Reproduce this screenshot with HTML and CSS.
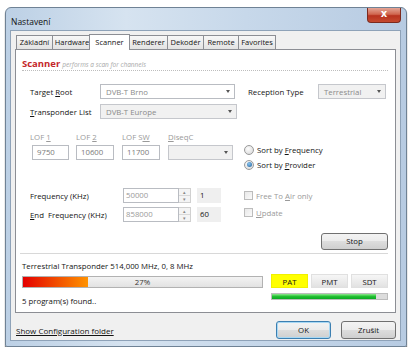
FILE: index.html
```html
<!DOCTYPE html>
<html>
<head>
<meta name="viewport" content="width=device-width, initial-scale=1">
<link rel="stylesheet" href="styles.css">
</head>
<body>

<div class="window">
  <div class="titlebar">
    <span class="title">Nastavení</span>
    <span class="closeBtn">x</span>
  </div>

  <div class="client">
    <div class="tabs">
      <span class="tab t1">Základní</span>
      <span class="tab t2">Hardware</span>
      <span class="tab active t3">Scanner</span>
      <span class="tab t4">Renderer</span>
      <span class="tab t5">Dekodér</span>
      <span class="tab t6">Remote</span>
      <span class="tab t7">Favorites</span>
    </div>

    <div class="page">
      <div class="head">
        <b>Scanner</b> <i>performs a scan for channels</i>
      </div>

      <div class="row r1">
        <label class="lbl">Target <u>R</u>oot</label>
        <div class="combo white w135"><span>DVB-T Brno</span><em></em></div>
        <label class="lbl lblRec">Reception Type</label>
        <div class="combo w68"><span>Terrestrial</span><em></em></div>
      </div>

      <div class="row r2">
        <label class="lbl"><u>T</u>ransponder List</label>
        <div class="combo w137"><span>DVB-T Europe</span><em></em></div>
      </div>

      <div class="lofBlock">
        <div class="lofCols">
          <div class="lofCol">
            <span class="gray">LOF <u>1</u></span>
            <div class="box">9750</div>
          </div>
          <div class="lofCol">
            <span class="gray">LOF <u>2</u></span>
            <div class="box">10600</div>
          </div>
          <div class="lofCol">
            <span class="gray">LOF S<u>W</u></span>
            <div class="box">11700</div>
          </div>
          <div class="lofCol wide">
            <span class="gray"><u>D</u>iseqC</span>
            <div class="combo w65"><span></span><em></em></div>
          </div>
        </div>
        <div class="radios">
          <div class="opt"><span class="radio"></span><span>Sort by <u>F</u>requency</span></div>
          <div class="opt"><span class="radio on"></span><span>Sort by <u>P</u>rovider</span></div>
        </div>
      </div>

      <div class="freqBlock">
        <div class="freqRows">
          <div class="frow">
            <label class="lbl lblFreq">Frequency (KHz)</label>
            <div class="box fbox">50000</div>
            <div class="spin"><i>&#9652;</i><i>&#9662;</i></div>
            <div class="step">1</div>
          </div>
          <div class="frow">
            <label class="lbl lblFreq"><u>E</u>nd&nbsp; Frequency (KHz)</label>
            <div class="box fbox">858000</div>
            <div class="spin"><i>&#9652;</i><i>&#9662;</i></div>
            <div class="step">60</div>
          </div>
        </div>
        <div class="checks">
          <div class="opt"><span class="chk"></span><span class="gray">Free To <u>A</u>ir only</span></div>
          <div class="opt"><span class="chk"></span><span class="gray"><u>U</u>pdate</span></div>
        </div>
      </div>

      <div class="stopRow">
        <span class="btn stop">Stop</span>
      </div>

      <div class="sep"></div>

      <div class="status">Terrestrial Transponder 514,000 MHz, 0, 8 MHz</div>

      <div class="progRow">
        <div class="prog">
          <div class="progFill" style="width:27%"></div>
          <span class="progText">27%</span>
        </div>
        <span class="tbl pat">PAT</span>
        <span class="tbl">PMT</span>
        <span class="tbl">SDT</span>
      </div>

      <div class="foundRow">
        <span class="found">5 program(s) found..</span>
        <div class="green">
          <div class="greenFill" style="width:90%"></div>
        </div>
      </div>
    </div>

    <div class="bottom">
      <span class="link">Show Configuration folder</span>
      <span class="btn ok">OK</span>
      <span class="btn">Zrušit</span>
    </div>
  </div>
</div>

</body>
</html>
```

FILE: styles.css
```css
body {
  margin: 0;
  background: #fff;
  font-family: "Open Sans", "Noto Sans", sans-serif;
  font-size: 7.8px;
  color: #141414;
}

* {
  box-sizing: border-box;
}

/* Window frame */
.window {
  margin: 7px 0 0 5px;
  width: 402px;
  height: 340px;
  border: 1px solid #6f8295;
  border-radius: 6px 6px 2px 2px;
  background: linear-gradient(to right, #bcd0e5, #d6e3f0 30%, #c7d8ea 60%, #b7cbe2);
  padding: 0 5px 5px 4px;
  display: flex;
  flex-direction: column;
  box-shadow: 0 2px 1px #2c2c2c;
}

.titlebar {
  height: 22px;
  display: flex;
  justify-content: space-between;
  align-items: flex-start;
}

.title {
  margin: 8px 0 0 1px;
  font-size: 8.5px;
  color: #111;
}

.closeBtn {
  width: 34px;
  height: 15px;
  border: 1px solid #7c2a1e;
  border-top: none;
  border-radius: 0 0 4px 4px;
  background: linear-gradient(#e4a596, #d0664f 45%, #b8321f 55%, #c54a2f);
  color: #fff;
  font-weight: bold;
  font-size: 10px;
  line-height: 12px;
  text-align: center;
  font-family: "DejaVu Sans", sans-serif;
}

.client {
  flex: 1;
  background: #f0f0f0;
  border: 1px solid #8ea2b8;
  padding: 3px 5px 0 4px;
}

/* Tabs */
.tabs {
  display: flex;
  align-items: flex-end;
  height: 15px;
  margin-left: 1px;
  position: relative;
  z-index: 1;
  font-size: 7.5px;
}

.tab {
  height: 14px;
  line-height: 13px;
  text-align: center;
  border: 1px solid #8c8e94;
  border-bottom: none;
  margin-right: -1px;
  background: linear-gradient(#f7f7f7, #e3e3e3);
}

.tab.active {
  height: 16px;
  margin: 0 -1px -1px -2px;
  background: #fff;
  line-height: 14px;
}

.t1 { width: 37px; }
.t2 { width: 40px; }
.t3 { width: 41px; }
.t4 { width: 39px; }
.t5 { width: 37px; }
.t6 { width: 36px; }
.t7 { width: 38px; }

.page {
  width: 381px;
  height: 264px;
  border: 1px solid #8c8e94;
  background: #fff;
  padding: 0 6px;
}

.head {
  margin-top: 8px;
  width: 366px;
  height: 13px;
  line-height: 11px;
  border-bottom: 1px dotted #bdbdbd;
}

.head b {
  color: #c4262a;
  font-size: 9.5px;
}

.head i {
  color: #a8a8a8;
  font-size: 6.5px;
}

.row {
  display: flex;
  align-items: center;
  height: 15px;
}

.r1 { margin-top: 13px; }
.r2 { margin-top: 5px; }

.lbl {
  width: 78px;
  padding-left: 8px;
}

.lblRec {
  width: 70px;
  margin-left: 13px;
  padding-left: 0;
}

/* Combos and text boxes */
.combo {
  height: 15px;
  border: 1px solid #c5c7cc;
  background: #f1f1f1;
  display: flex;
  align-items: center;
  justify-content: space-between;
  padding: 0 4px 0 5px;
  color: #8a8a8a;
}

.combo.white {
  background: #fff;
  border-color: #b9bcc2;
}

.combo em {
  width: 0;
  height: 0;
  border-left: 2.5px solid transparent;
  border-right: 2.5px solid transparent;
  border-top: 3px solid #555;
}

.w135 { width: 135px; }
.w137 { width: 137px; }
.w68 { width: 68px; }
.w65 { width: 65px; }

.gray {
  color: #9a9a9a;
}

.lofBlock {
  display: flex;
  margin-top: 13px;
  height: 40px;
}

.lofCols {
  display: flex;
  width: 222px;
  padding-left: 8px;
}

.lofCol {
  width: 46px;
  display: flex;
  flex-direction: column;
}

.lofCol.wide {
  width: 70px;
}

.lofCol > span {
  height: 11px;
  line-height: 10px;
  margin-bottom: 2px;
}

.box {
  width: 38px;
  height: 15px;
  border: 1px solid #b9bcc2;
  background: #fff;
  color: #7a7a7a;
  line-height: 13px;
  padding-left: 4px;
}

.lofCol:first-child .box {
  margin-left: 2px;
  width: 37px;
}

.radios {
  padding-top: 10px;
}

.opt {
  height: 15px;
  display: flex;
  align-items: center;
}

.radio {
  width: 10px;
  height: 10px;
  border-radius: 50%;
  border: 1px solid #9a9a9a;
  background: radial-gradient(circle at 40% 35%, #fdfdfd, #d4d4d4);
  margin-right: 3px;
  display: flex;
  align-items: center;
  justify-content: center;
}

.radio.on::after {
  content: "";
  width: 5px;
  height: 5px;
  border-radius: 50%;
  background: radial-gradient(circle at 40% 35%, #8ac6f2, #1f5d96);
}

.freqBlock {
  display: flex;
  margin-top: 16px;
}

.freqRows {
  width: 222px;
}

.frow {
  display: flex;
  align-items: center;
  height: 15px;
  margin-bottom: 4px;
}

.lblFreq {
  width: 101px;
}

.fbox {
  width: 56px;
  color: #9a9a9a;
  padding-left: 2px;
}

.spin {
  width: 12px;
  height: 15px;
  border: 1px solid #d0d0d0;
  border-left: none;
  display: flex;
  flex-direction: column;
  background: #f4f4f4;
}

.spin i {
  flex: 1;
  font-style: normal;
  font-size: 5px;
  line-height: 6px;
  text-align: center;
  color: #888;
}

.spin i:first-child {
  border-bottom: 1px solid #d8d8d8;
}

.step {
  width: 24px;
  height: 15px;
  margin-left: 6px;
  background: #efefef;
  line-height: 15px;
  padding-left: 3px;
}

.checks .opt {
  margin-bottom: 2px;
}

.chk {
  width: 9px;
  height: 9px;
  border: 1px solid #bcbcbc;
  background: linear-gradient(135deg, #e8e8e8, #fafafa);
  margin-right: 3px;
}

/* Buttons */
.btn {
  display: inline-block;
  height: 17px;
  line-height: 15px;
  text-align: center;
  border: 1px solid #707070;
  border-radius: 3px;
  background: linear-gradient(#f3f3f3, #ebebeb 50%, #dddddd 50%, #cfcfcf);
}

.stopRow {
  display: flex;
  justify-content: flex-end;
  width: 366px;
  margin-top: 7px;
}

.stop {
  width: 67px;
}

.sep {
  width: 368px;
  margin-left: -2px;
  margin-top: 3px;
  border-top: 1px solid #d8d8d8;
}

.status {
  margin-top: 6px;
  height: 12px;
  line-height: 12px;
}

.progRow {
  display: flex;
  height: 14px;
  margin-top: 2px;
}

.prog {
  width: 241px;
  height: 12px;
  margin-top: 2px;
  border: 1px solid #b2b2b2;
  background: linear-gradient(#f3f3f3, #e2e2e2);
  display: flex;
  position: relative;
}

.progFill {
  height: 100%;
  background: linear-gradient(to right, #e40000, #f25200 55%, #ff9300);
}

.progText {
  position: absolute;
  left: 0;
  right: 0;
  top: 0;
  text-align: center;
  line-height: 10px;
  color: #333;
}

.tbl {
  width: 37px;
  height: 14px;
  margin-left: 3px;
  line-height: 14px;
  text-align: center;
  background: linear-gradient(#f6f6f6, #e2e2e2);
  border: 1px solid #e0e0e0;
}

.tbl.pat {
  margin-left: 8px;
  background: #ffff00;
  border-color: #f0f000;
}

.foundRow {
  display: flex;
  justify-content: space-between;
  width: 366px;
  margin-top: 5px;
}

.found {
  line-height: 16px;
}

.green {
  width: 117px;
  height: 7px;
  border: 1px solid #bcbcbc;
  background: #dcdcdc;
}

.greenFill {
  height: 100%;
  background: linear-gradient(#8ee88e, #20c030 50%, #0aa823);
}

/* Bottom bar */
.bottom {
  display: flex;
  align-items: center;
  margin-top: 8px;
  width: 381px;
}

.link {
  flex: 1;
  margin-left: 1px;
  text-decoration: underline;
  font-size: 8px;
}

.bottom .btn {
  width: 55px;
  height: 18px;
  line-height: 16px;
  margin-left: 10px;
}

.bottom .ok {
  border-color: #3c7fb1;
  box-shadow: inset 0 0 0 1px #a8d8f4;
}
```
